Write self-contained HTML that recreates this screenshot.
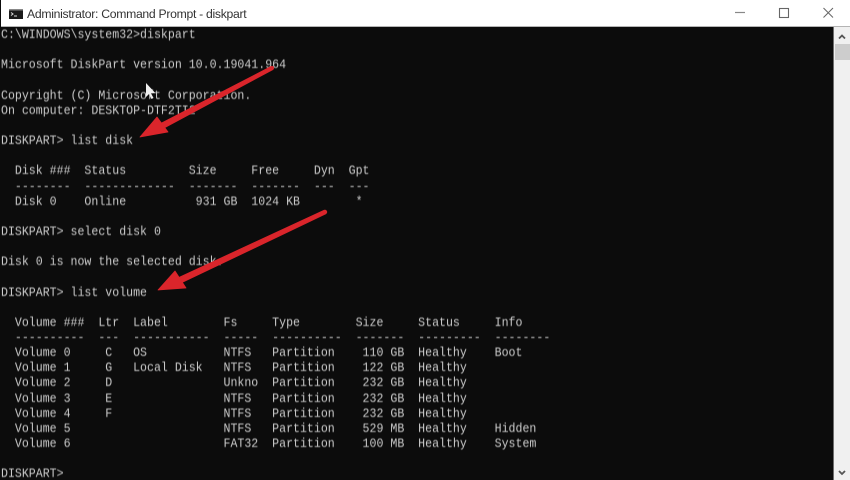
<!DOCTYPE html>
<html><head><meta charset="utf-8"><title>Administrator: Command Prompt - diskpart</title>
<style>
html,body{margin:0;padding:0;background:#0c0c0c}
#w{position:relative;width:850px;height:480px;overflow:hidden;background:#0c0c0c}
#tb{position:absolute;left:1px;top:0;width:849px;height:26px;background:#fff;border-bottom:1px solid #b4b4b4}
#tt{position:absolute;left:27px;top:5.5px;font:12.2px/16px "Liberation Sans",sans-serif;letter-spacing:-.29px;color:#333;white-space:nowrap;filter:blur(.3px)}
#sb{position:absolute;left:834px;top:27px;width:16px;height:453px;background:#f0f0f0}
#sl{position:absolute;left:833px;top:27px;width:1px;height:453px;background:#6e6e6e}
#th{position:absolute;left:835px;top:44px;width:15px;height:16px;background:#cdcdcd}
pre{position:absolute;left:1px;top:28.2px;margin:0;font:12.6px/15.14px "Liberation Mono",monospace;color:#cccccc;filter:blur(.4px);transform:scaleX(.92);transform-origin:0 0}
svg{position:absolute;left:0;top:0}
</style></head><body>
<div id="w">
<pre>C:\WINDOWS\system32&gt;diskpart

Microsoft DiskPart version 10.0.19041.964

Copyright (C) Microsoft Corporation.
On computer: DESKTOP-DTF2TI2

DISKPART&gt; list disk

  Disk ###  Status         Size     Free     Dyn  Gpt
  --------  -------------  -------  -------  ---  ---
  Disk 0    Online          931 GB  1024 KB        *

DISKPART&gt; select disk 0

Disk 0 is now the selected disk.

DISKPART&gt; list volume

  Volume ###  Ltr  Label        Fs     Type        Size     Status     Info
  ----------  ---  -----------  -----  ----------  -------  ---------  --------
  Volume 0     C   OS           NTFS   Partition    110 GB  Healthy    Boot
  Volume 1     G   Local Disk   NTFS   Partition    122 GB  Healthy
  Volume 2     D                Unkno  Partition    232 GB  Healthy
  Volume 3     E                NTFS   Partition    232 GB  Healthy
  Volume 4     F                NTFS   Partition    232 GB  Healthy
  Volume 5                      NTFS   Partition    529 MB  Healthy    Hidden
  Volume 6                      FAT32  Partition    100 MB  Healthy    System

DISKPART&gt;</pre>
<div id="tb"></div>
<div id="tt">Administrator: Command Prompt - diskpart</div>
<div id="sl"></div>
<div id="sb"></div>
<div id="th"></div>
<svg width="850" height="480" viewBox="0 0 850 480">
  <!-- title icon -->
  <rect x="9" y="9" width="14" height="10" fill="#1a1a1a"/>
  <rect x="9" y="9" width="14" height="1.5" fill="#888"/>
  <path d="M11 12.5l2 1.5-2 1.5M14 16h3" stroke="#ddd" stroke-width="1" fill="none"/>
  <!-- window controls -->
  <path d="M735 12.5h10" stroke="#888" stroke-width="1.2" fill="none"/>
  <rect x="779.5" y="8.5" width="9" height="9" stroke="#666" stroke-width="1.1" fill="none"/>
  <path d="M823.5 8l9.5 9.5M833 8l-9.5 9.5" stroke="#666" stroke-width="1" fill="none"/>
  <!-- scrollbar chevrons -->
  <path d="M839 38.5l3-3 3 3" stroke="#555" stroke-width="1.8" fill="none"/>
  <path d="M839 471l3 3 3-3" stroke="#555" stroke-width="1.8" fill="none"/>
  <!-- cursor -->
  <path d="M146 83l0 14 3-3 2.5 5 2-1-2.5-4.8h4.5z" fill="#eee"/>
  <!-- red arrows -->
  <g fill="#da252b" stroke="#da252b" stroke-width=".8" stroke-linejoin="round">
    <path d="M272.8 69.6L271.2 66.4 158.7 124.5 161.3 129.5z"/>
    <path d="M140 137L157 117 168 132z"/>
    <path d="M325.9 213.8L324.1 210.2 170.7 281.3 173.3 286.7z"/>
    <path d="M158 290L175 271 186 288z"/>
  </g>
  <circle cx="272" cy="68" r="2" fill="#da252b"/>
  <circle cx="325" cy="212" r="2.2" fill="#da252b"/>
</svg>
</div>
</body></html>
